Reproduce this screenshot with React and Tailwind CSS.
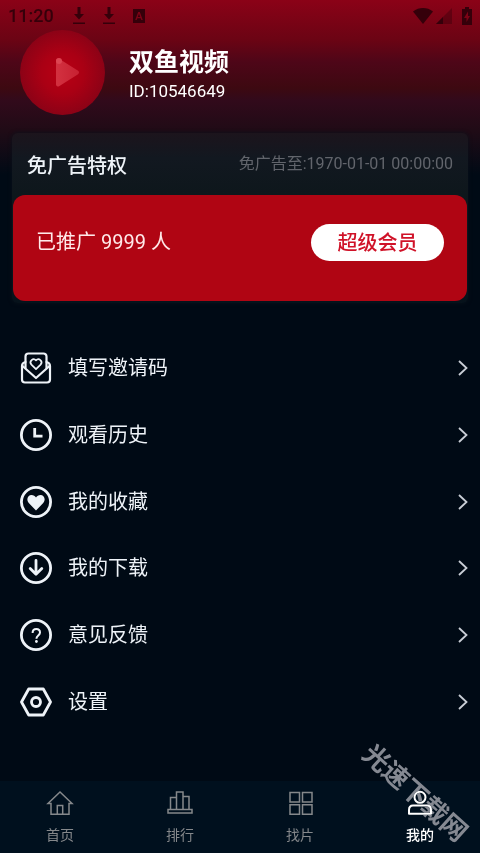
import { useState } from "react";

const InviteIcon = () => (
  <svg viewBox="0 0 32 32" className="size-8" fill="none" stroke="currentColor" strokeWidth="2.200" strokeLinejoin="round" strokeLinecap="round" aria-hidden="true">
    <path d="M5.500 16V4.500a3 3 0 0 1 3-3h15a3 3 0 0 1 3 3V16" />
    <path d="M5.500 10C3 10.500 2 11.500 2 14v13.500a3 3 0 0 0 3 3h22a3 3 0 0 0 3-3V14c0-2.500-1-3.500-3.500-4" />
    <path d="M2.500 14 16 26l13.500-12" />
    <path strokeWidth="1.700" d="M16 17.200l-4.600-4.600a3.100 3.100 0 0 1 4.600-4.200 3.100 3.100 0 0 1 4.600 4.200z" />
  </svg>
);

const RingIcon = ({ children }) => (
  <svg viewBox="0 0 32 32" className="size-8" fill="none" stroke="currentColor" strokeWidth="2.800" aria-hidden="true">
    <circle cx="16" cy="16" r="14.600" />
    {children}
  </svg>
);

const ClockIcon = () => (
  <RingIcon>
    <path d="M14.700 9v8.200H22.500" />
  </RingIcon>
);

const HeartIcon = () => (
  <RingIcon>
    <path fill="currentColor" stroke="none" d="M16 24.500 9 17.300C5.600 13.400 8 9 11.500 9c2 0 3.600 1 4.500 2.600C16.900 10 18.500 9 20.500 9c3.500 0 5.900 4.400 2.500 8.300z" />
  </RingIcon>
);

const DownIcon = () => (
  <RingIcon>
    <path strokeLinecap="round" strokeLinejoin="round" d="M16 8.500v13.500M10.200 16.500 16 22.300l5.800-5.800" />
  </RingIcon>
);

const QuestionIcon = () => (
  <RingIcon>
    <path strokeWidth="2" d="M12.600 14c0-2.400 1.500-4 3.700-4s3.700 1.400 3.700 3.500c0 3-3.600 3-3.600 6.300" />
    <circle cx="16.400" cy="22.500" r="1.400" fill="currentColor" stroke="none" />
  </RingIcon>
);

const SettingsIcon = () => (
  <svg viewBox="0 0 32 32" className="size-8" fill="none" stroke="currentColor" strokeWidth="2.800" strokeLinejoin="round" aria-hidden="true">
    <path d="M8.700 3h14.600L30.500 16l-7.200 13H8.700L1.500 16z" />
    <circle cx="16" cy="16" r="4.500" />
  </svg>
);

const HomeIcon = () => (
  <svg viewBox="0 0 28 28" className="size-7" fill="none" stroke="currentColor" strokeWidth="1.500" aria-hidden="true">
    <path d="M5 14.500H2L14 3l12 11.500h-3v10.700H5z" />
    <path d="M11.300 25v-8.500h5.400V25" />
  </svg>
);

const RankIcon = () => (
  <svg viewBox="0 0 28 28" className="size-7" fill="none" stroke="currentColor" strokeWidth="1.500" aria-hidden="true">
    <path d="M2 20.500h24V24H2zM4.500 20V8.500h6M10.500 20.500V3h6.500v17.500M17 7.500h6v13" />
  </svg>
);

const GridIcon = () => (
  <svg viewBox="0 0 28 28" className="size-7" fill="none" stroke="currentColor" strokeWidth="1.500" aria-hidden="true">
    <path d="M4 3.500h9.500v9.500H4zM16.500 3.500H26v9.500h-9.500zM4 15.800h9.500v9.500H4zM16.500 15.800H26v9.500h-9.500z" />
  </svg>
);

const MineIcon = () => (
  <svg viewBox="0 0 28 28" className="size-7" fill="none" stroke="currentColor" strokeWidth="2" strokeLinejoin="round" aria-hidden="true">
    <circle cx="14" cy="8.300" r="5.500" />
    <path d="M3 24.700V21c0-3 1.500-4.500 4-4.500h14c2.500 0 4 1.500 4 4.500v3.700z" />
  </svg>
);

const DownloadMark = () => (
  <svg viewBox="0 0 14 18" className="h-[18px] w-[14px]" fill="currentColor" aria-hidden="true">
    <path d="M5.500 0h3v7H12l-5 5.500L2 7h3.500zM1 15.500h12v1.500H1z" />
  </svg>
);

const menu = [
  { label: "填写邀请码", Icon: InviteIcon },
  { label: "观看历史", Icon: ClockIcon },
  { label: "我的收藏", Icon: HeartIcon },
  { label: "我的下载", Icon: DownIcon },
  { label: "意见反馈", Icon: QuestionIcon },
  { label: "设置", Icon: SettingsIcon },
];

const tabs = [
  { label: "首页", Icon: HomeIcon },
  { label: "排行", Icon: RankIcon },
  { label: "找片", Icon: GridIcon },
  { label: "我的", Icon: MineIcon },
];

const StatusBar = () => (
  <div className="flex h-8 items-center justify-between px-2 text-[#35000a]">
    <div className="flex items-center">
      <span className="w-16 text-[18px] font-medium leading-6">11:20</span>
      <span className="flex items-center gap-4">
        <DownloadMark />
        <DownloadMark />
        <svg viewBox="0 0 14 14" className="size-[14px]" aria-hidden="true">
          <path fill="currentColor" fillRule="evenodd" d="M1 0h12v14H1zM6.200 3 3.200 11h1.500l.6-1.800h3.400L9.300 11h1.500l-3-8zM7 4.700 8.200 8H5.800z" />
        </svg>
      </span>
    </div>
    <div className="flex items-center">
      <svg viewBox="0 0 20 16" className="h-4 w-5" fill="currentColor" aria-hidden="true">
        <path d="M10 16 0 3.500C3 1 6.500 0 10 0s7 1 10 3.500z" />
      </svg>
      <svg viewBox="0 0 16 16" className="ml-[3px] size-4" fill="currentColor" aria-hidden="true">
        <path opacity=".4" d="M16 0v16H0z" />
        <path d="M7 9v7H0z" />
      </svg>
      <svg viewBox="0 0 10 18" className="ml-[10px] h-[18px] w-[10px]" fill="currentColor" aria-hidden="true">
        <path fillRule="evenodd" d="M3 0h4v2h3v16H0V2h3zM6 4.500 2 11h2.500v4L8 9H6z" />
      </svg>
    </div>
  </div>
);

const Profile = () => (
  <div className="-mt-[2px] flex items-center gap-6 px-5">
    <svg viewBox="0 0 85 85" className="size-[85px]" aria-hidden="true">
      <defs>
        <radialGradient id="disc">
          <stop offset="0" stopColor="#b90014" />
          <stop offset="0.5" stopColor="#aa0014" />
          <stop offset="1" stopColor="#8c0216" />
        </radialGradient>
        <linearGradient id="play">
          <stop offset="0" stopColor="#d2303f" />
          <stop offset="1" stopColor="#c82233" />
        </linearGradient>
      </defs>
      <circle cx="42.500" cy="42.500" r="42.500" fill="url(#disc)" />
      <path d="M38 30.500 57 42.500 38 54.500z" fill="url(#play)" stroke="url(#play)" strokeWidth="4" strokeLinejoin="round" />
      <circle cx="39" cy="31" r="3" fill="#dc4552" />
    </svg>
    <div className="pt-2 text-white">
      <h1 className="text-[25px] font-bold leading-7">双鱼视频</h1>
      <p className="text-[17px] leading-7">ID:10546649</p>
    </div>
  </div>
);

const App = () => {
  const [active, setActive] = useState("我的");

  return (
    <div className="relative flex min-h-screen flex-col overflow-hidden bg-[#000a15] bg-[linear-gradient(180deg,#8b0217_0px,#6b0414_40px,#4e0618_62px,#3d0911_88px,#320a1b_100px,#200b16_130px,#000a15_175px)] font-[Roboto,'Noto_Sans_CJK_SC',sans-serif]">
      <StatusBar />
      <main className="flex flex-1 flex-col">
        <Profile />

        <section className="mx-3 mt-[18px] rounded-md bg-[linear-gradient(180deg,#1c141c_0px,#121820_25px,#0e171c_60px,#06121b_170px)] pb-[2px] shadow-[0_0_4px_#0a131b]">
          <div className="flex h-[62px] items-center justify-between px-[15px]">
            <h2 className="pt-1 text-[20px] font-medium leading-7 text-[#eef3f8]">免广告特权</h2>
            <p className="text-[16px] leading-6 text-[#62656c]">免广告至:1970-01-01 00:00:00</p>
          </div>
          <div className="mx-px flex h-[106px] items-start justify-between rounded-xl bg-[#b00513] px-[23px] pt-[29px]">
            <p className="py-1 text-[20px] leading-7 text-[#ffe9e9]">已推广 9999 人</p>
            <button type="button" className="h-[37px] w-[133px] rounded-full bg-white text-[20px] font-medium leading-7 text-[#d01228]">
              超级会员
            </button>
          </div>
        </section>

        <ul className="mt-8 grid h-100 grid-rows-6">
          {menu.map(({ label, Icon }) => (
            <li key={label}>
              <button type="button" className="flex h-full w-full items-center gap-4 pl-5 pr-3 text-[#eef3f8]">
                <Icon />
                <span className="text-[20px] leading-7">{label}</span>
                <svg viewBox="0 0 10 16" className="ml-auto h-4 w-[10px]" fill="none" stroke="#c9ced6" strokeWidth="1.800" aria-hidden="true">
                  <path d="M1 1l7.500 7L1 15" />
                </svg>
              </button>
            </li>
          ))}
        </ul>
      </main>

      <nav className="grid h-[72px] grid-cols-4 bg-[#00101e]">
        {tabs.map(({ label, Icon }) => (
          <button
            key={label}
            type="button"
            onClick={() => setActive(label)}
            className={`flex flex-col items-center gap-1 pt-2 ${active === label ? "font-medium text-white" : "text-[#85888b]"}`}
          >
            <Icon />
            <span className="text-[14px] leading-7">{label}</span>
          </button>
        ))}
      </nav>

      {/* site watermark, laid over the page corner */}
      <span className="pointer-events-none absolute right-0 bottom-11 origin-center rotate-42 whitespace-nowrap text-[26px] font-bold leading-8 text-[#858992] mix-blend-lighten">
        光速下载网
      </span>
    </div>
  );
};

export default App;
